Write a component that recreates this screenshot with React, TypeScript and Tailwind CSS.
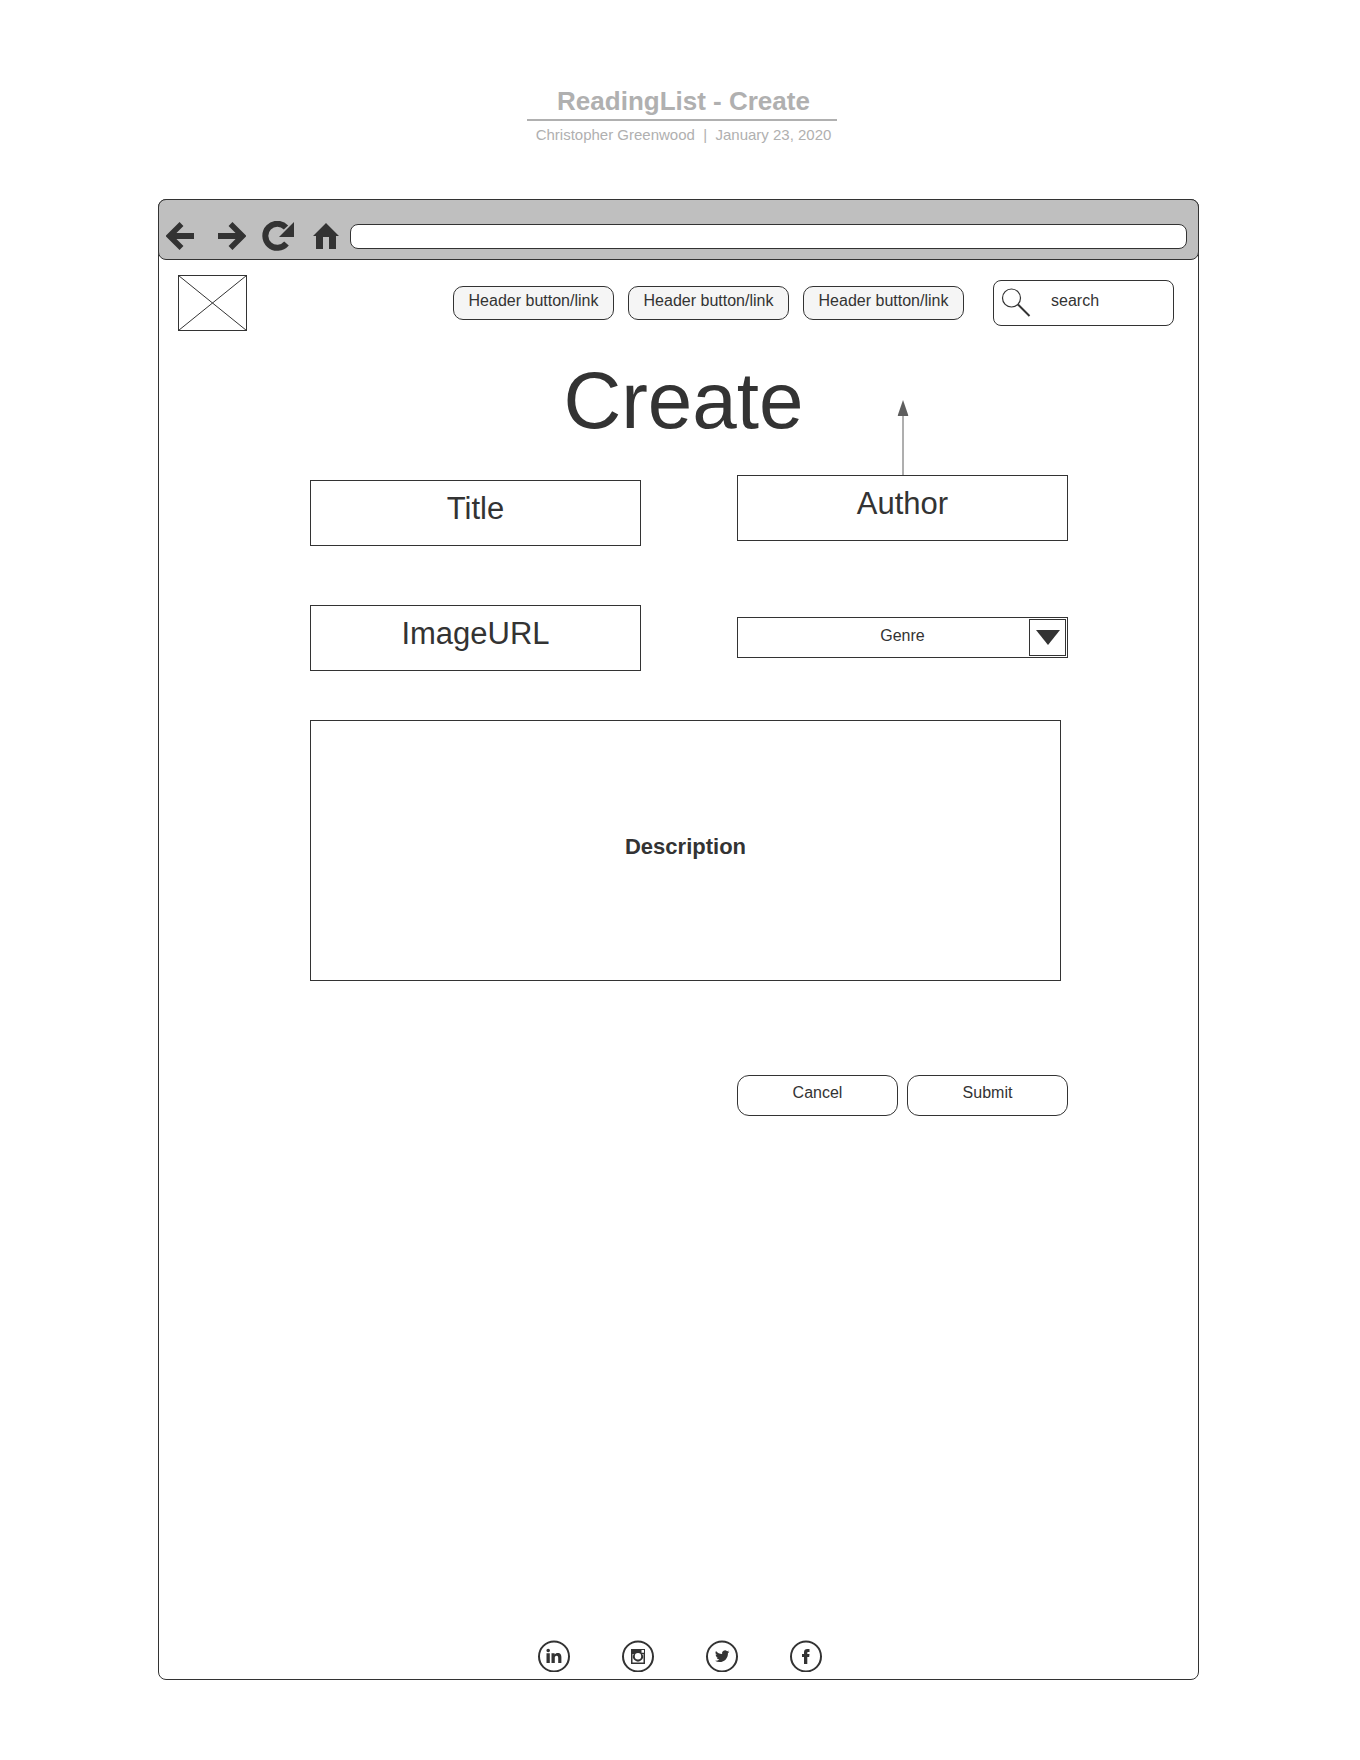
import React from "react";

const navItems = ["Header button/link", "Header button/link", "Header button/link"];

function BackIcon() {
  return (
    <svg width="28" height="28" viewBox="0 0 28 28" fill="none" stroke="#333" aria-hidden="true">
      <path d="M28 14H5" strokeWidth="6" />
      <path d="M15.5 2L3.500 14L15.500 26" strokeWidth="5.500" />
    </svg>
  );
}

function ForwardIcon() {
  return (
    <svg width="28" height="28" viewBox="0 0 28 28" fill="none" stroke="#333" aria-hidden="true">
      <path d="M0 14H23" strokeWidth="6" />
      <path d="M12.500 2L24.500 14L12.500 26" strokeWidth="5.500" />
    </svg>
  );
}

function ReloadIcon() {
  return (
    <svg width="32" height="30" viewBox="0 0 32 30" aria-hidden="true">
      <path d="M24 6.500A12 12 0 1 0 24.500 22.500" fill="none" stroke="#333" strokeWidth="6" />
      <path d="M32 1V16H17L22 11L24 9Z" fill="#333" />
    </svg>
  );
}

function HomeIcon() {
  return (
    <svg width="26" height="26" viewBox="0 0 26 26" fill="#333" aria-hidden="true">
      <path d="M13 0L26 13H23V26H16V14H10V26H3V13H0Z" />
    </svg>
  );
}

function SearchIcon() {
  return (
    <svg width="30" height="30" viewBox="0 0 30 30" fill="none" stroke="#333" aria-hidden="true">
      <circle cx="10.500" cy="10" r="9" strokeWidth="1.200" />
      <path d="M17 16.500L28.500 28" strokeWidth="2" />
    </svg>
  );
}

function LogoPlaceholder() {
  return (
    <svg width="69" height="56" viewBox="0 0 69 56" fill="none" stroke="#333" role="img" aria-label="Logo">
      <rect x="0.500" y="0.500" width="68" height="55" />
      <path d="M0.500 0.500L68.500 55.500M68.500 0.500L0.500 55.500" />
    </svg>
  );
}

const socials = [
  {
    name: "LinkedIn",
    art: (
      <path d="M8.500 13.200H11.800V23H8.500ZM10.200 8.700A1.800 1.800 0 1 1 10.200 12.300A1.800 1.800 0 1 1 10.200 8.700ZM13.500 13.200H16.600V14.500C17.200 13.500 18.400 12.900 19.700 12.900C22.600 12.900 23.400 14.800 23.400 17.300V23H20.200V18C20.200 16.700 20 15.700 18.600 15.700C17.200 15.700 16.800 16.700 16.800 17.900V23H13.500Z" />
    ),
  },
  {
    name: "Instagram",
    art: (
      <path
        fillRule="evenodd"
        d="M9 9H23V24H9ZM19.500 10V12.800H22V10ZM10.500 14V22.500H21.500V14H20.300A5 5 0 1 1 11.700 14ZM16 13A3.200 3.200 0 1 0 16 19.400A3.200 3.200 0 1 0 16 13Z"
      />
    ),
  },
  {
    name: "Twitter",
    art: (
      <path
        transform="translate(9 9) scale(0.600)"
        d="M23.950 4.570a10 10 0 0 1-2.820.770 4.960 4.960 0 0 0 2.160-2.720c-.950.560-2 .960-3.130 1.180a4.920 4.920 0 0 0-8.380 4.480C7.690 8.100 4.070 6.130 1.640 3.160a4.920 4.920 0 0 0 1.520 6.570 4.900 4.900 0 0 1-2.230-.610v.060a4.920 4.920 0 0 0 3.950 4.830 5 5 0 0 1-2.210.080 4.940 4.940 0 0 0 4.600 3.420A9.870 9.870 0 0 1 0 19.540a14 14 0 0 0 7.550 2.210c9.050 0 14-7.500 14-13.980 0-.210 0-.420-.020-.630a9.940 9.940 0 0 0 2.460-2.550z"
      />
    ),
  },
  {
    name: "Facebook",
    art: (
      <path d="M14 24V17H12V14H14V12.300C14 10 15.300 9 17.300 9H19.500V12H18.300C17.400 12 17.300 12.400 17.300 13.100V14H19.500L19.200 17H17.300V24Z" />
    ),
  },
];

function TextField({ label }: { label: string }) {
  return (
    <input
      type="text"
      aria-label={label}
      placeholder={label}
      className="block h-[66px] w-full border border-[#333] bg-white px-4 pb-2 text-center text-[31px] leading-[36px] text-[#333] outline-none placeholder:text-[#333] placeholder:opacity-100"
    />
  );
}

function BrowserBar() {
  return (
    <div className="-mx-px -mt-px flex h-[61px] items-center rounded-lg border border-[#333] bg-[#bfbfbf] pt-[13px] pr-[11px] pl-[7px]">
      <button type="button" aria-label="Back" className="mr-6">
        <BackIcon />
      </button>
      <button type="button" aria-label="Forward" className="mr-4">
        <ForwardIcon />
      </button>
      <button type="button" aria-label="Reload" className="mr-[19px]">
        <ReloadIcon />
      </button>
      <button type="button" aria-label="Home" className="mr-[11px]">
        <HomeIcon />
      </button>
      <input
        type="text"
        aria-label="Address"
        className="h-[25px] min-w-0 flex-1 rounded-lg border border-[#333] bg-white px-3 text-base outline-none"
      />
    </div>
  );
}

function Header() {
  return (
    <header className="flex flex-wrap items-center pt-[15px] pr-6 pl-[19px]">
      <a href="#" aria-label="Home page">
        <LogoPlaceholder />
      </a>
      <nav className="ml-auto flex gap-[14px]">
        {navItems.map((item, i) => (
          <a
            key={i}
            href="#"
            className="flex h-[34px] w-[161px] items-center justify-center rounded-[10px] border border-[#333] bg-[#f5f5f5] pb-1 text-base leading-[18px]"
          >
            {item}
          </a>
        ))}
      </nav>
      <label className="ml-[29px] flex h-[46px] w-[181px] items-center rounded-lg border border-[#333] bg-white pl-[7px]">
        <SearchIcon />
        <input
          type="text"
          aria-label="search"
          placeholder="search"
          className="ml-5 min-w-0 flex-1 bg-transparent pb-1 text-base leading-[18px] outline-none placeholder:text-[#333] placeholder:opacity-100"
        />
      </label>
    </header>
  );
}

function CreateForm() {
  return (
    <form className="px-6 lg:pr-[130px] lg:pl-[151px]" onSubmit={(e) => e.preventDefault()}>
      <div className="flex gap-24">
        <div className="flex min-w-0 flex-1 flex-col gap-[59px] pt-[39px]">
          <TextField label="Title" />
          <TextField label="ImageURL" />
        </div>
        <div className="flex min-w-0 flex-1 flex-col gap-[76px] pt-[34px]">
          <div className="relative">
            <svg
              className="absolute bottom-full left-1/2 -translate-x-1/2"
              width="11"
              height="75"
              viewBox="0 0 11 75"
              aria-hidden="true"
            >
              <path d="M5.500 15V75" stroke="#5e5e5e" />
              <path d="M5.500 0L11 16H0Z" fill="#5e5e5e" />
            </svg>
            <TextField label="Author" />
          </div>
          <div className="relative">
            <select
              aria-label="Genre"
              className="block h-[41px] w-full appearance-none border border-[#333] bg-white px-10 pb-1 text-center text-base leading-[18px] outline-none"
            >
              <option>Genre</option>
            </select>
            <span className="pointer-events-none absolute inset-y-[2px] right-[2px] flex w-[37px] items-center justify-center border border-[#333]">
              <svg width="24" height="15" viewBox="0 0 24 15" fill="#333" aria-hidden="true">
                <path d="M0 0H24L12 15Z" />
              </svg>
            </span>
          </div>
        </div>
      </div>
      <div className="mt-[49px] pr-[7px]">
        <textarea
          aria-label="Description"
          placeholder="Description"
          className="block h-[261px] w-full resize-none border border-[#333] bg-white pt-[113px] text-center text-[22px] leading-[26px] font-bold outline-none placeholder:text-[#333] placeholder:opacity-100"
        />
      </div>
      <div className="mt-[94px] flex justify-end gap-[9px]">
        <button
          type="button"
          className="h-[41px] w-[161px] rounded-xl border border-[#333] bg-white pb-[5px] text-base leading-[18px]"
        >
          Cancel
        </button>
        <button
          type="submit"
          className="h-[41px] w-[161px] rounded-xl border border-[#333] bg-white pb-[5px] text-base leading-[18px]"
        >
          Submit
        </button>
      </div>
    </form>
  );
}

export default function App() {
  return (
    <div className="flex min-h-screen flex-col bg-white pr-[3px] pb-20 font-['Liberation_Sans',Arial,sans-serif] text-[#333]">
      <div className="flex flex-col items-center pt-[86px] pl-[7px] text-[#b0b0b0]">
        <p className="w-[310px] border-b-2 border-[#b0b0b0] pb-[3px] pl-[3px] text-center text-[26px] leading-[30px] font-bold">
          ReadingList - Create
        </p>
        <p className="pt-[5px] pl-[3px] text-[15px] leading-[18px] whitespace-pre">
          Christopher Greenwood&nbsp; |&nbsp; January 23, 2020
        </p>
      </div>
      <div className="mx-auto mt-[55px] flex w-full max-w-[1041px] flex-1 flex-col rounded-lg border border-[#333] bg-white">
        <BrowserBar />
        <Header />
        <main className="pb-10">
          <h1 className="mt-[30px] pl-[10px] text-center text-[80px] leading-[80px]">Create</h1>
          <CreateForm />
        </main>
        <footer className="mt-auto flex justify-center gap-[52px] pb-[7px] pl-[3px]">
          {socials.map((s) => (
            <a key={s.name} href="#" aria-label={s.name}>
              <svg width="32" height="32" viewBox="0 0 32 32" fill="#333" aria-hidden="true">
                <circle cx="16" cy="16.500" r="15" fill="none" stroke="#333" strokeWidth="2" />
                {s.art}
              </svg>
            </a>
          ))}
        </footer>
      </div>
    </div>
  );
}
